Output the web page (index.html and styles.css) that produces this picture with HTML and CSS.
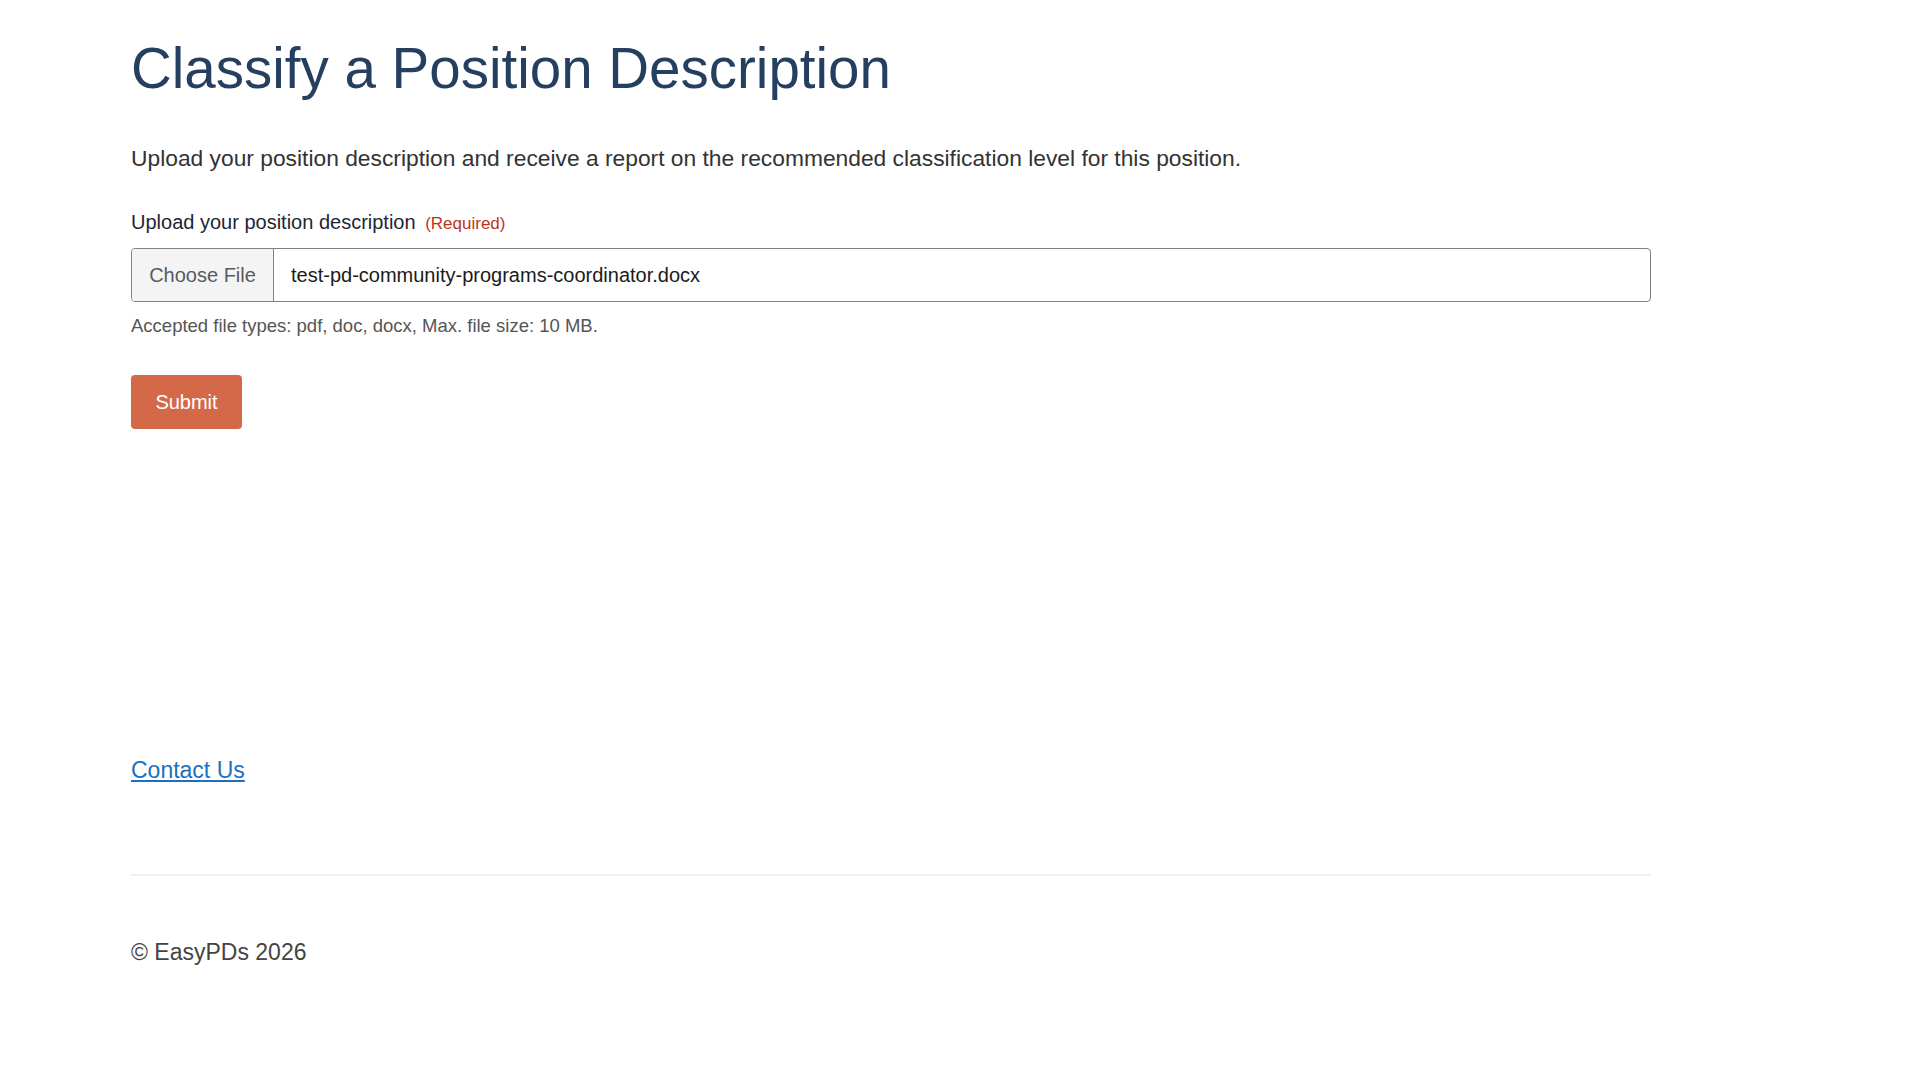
FILE: index.html
```html
<!DOCTYPE html>
<html>
<head>
    <title>Classify a Position Description - EasyPDs</title>
    <link rel="stylesheet" href="styles.css">
</head>
<body>
    <main class="page">
        <h1>Classify a Position Description</h1>
        <p class="intro">Upload your position description and receive a report on the recommended classification level for this position.</p>

        <form id="classifyForm" class="classify-form">
            <label class="field-label" for="pdFile">Upload your position description <span class="required">(Required)</span></label>
            <label class="file-field">
                <input type="file" id="pdFile" name="pd" accept=".pdf,.doc,.docx">
                <span class="file-button">Choose File</span>
                <span class="file-name">test-pd-community-programs-coordinator.docx</span>
            </label>
            <div class="hint">Accepted file types: pdf, doc, docx, Max. file size: 10 MB.</div>
            <button type="submit" class="submit">Submit</button>
        </form>

        <div class="contact"><a href="#">Contact Us</a></div>

        <footer class="footer">
            <hr>
            <p>&copy; EasyPDs 2026</p>
        </footer>
    </main>
</body>
</html>
```

FILE: styles.css
```css
body {
    margin: 0;
    font-family: 'Liberation Sans', Arial, sans-serif;
    color: #333;
    background: #fff;
}
.page {
    width: 1520px;
    padding-left: 131px;
}
h1 {
    font-size: 56.5px;
    font-weight: 400;
    line-height: 68px;
    color: #243f5f;
    margin: 35px 0 0;
}
.intro {
    font-size: 22.8px;
    line-height: 34px;
    margin: 38px 0 0;
    color: #333;
}
.classify-form {
    margin-top: 32px;
}
.field-label {
    display: block;
    font-size: 20px;
    line-height: 30px;
    color: #1d2733;
}
.required {
    font-size: 17px;
    color: #c0341a;
    margin-left: 4px;
}
.file-field {
    display: flex;
    margin-top: 9px;
    height: 54px;
    box-sizing: border-box;
    border: 1.5px solid #7d828a;
    border-radius: 4px;
    overflow: hidden;
    cursor: pointer;
}
.file-field input {
    display: none;
}
.file-button {
    display: flex;
    align-items: center;
    justify-content: center;
    width: 141px;
    background: #f4f4f4;
    border-right: 1.5px solid #7d828a;
    color: #555b63;
    font-size: 20px;
}
.file-name {
    display: flex;
    align-items: center;
    padding-left: 17px;
    font-size: 20px;
    color: #1b1b1b;
}
.hint {
    margin-top: 10px;
    font-size: 18.5px;
    line-height: 27px;
    color: #555;
}
.submit {
    display: block;
    margin-top: 36px;
    width: 111px;
    height: 54px;
    border: none;
    border-radius: 4px;
    background: #d4694a;
    color: #fff;
    font-family: inherit;
    font-size: 20px;
    cursor: pointer;
}
.submit:hover {
    background: #c25a3c;
}
.contact {
    margin-top: 324px;
    font-size: 23px;
    line-height: 34px;
}
.contact a {
    color: #1b70c4;
}
.footer hr {
    margin: 87px 0 0;
    border: none;
    border-top: 2px solid #f0f0f0;
}
.footer p {
    margin: 59px 0 0;
    font-size: 23px;
    line-height: 34px;
    color: #444;
}
```
